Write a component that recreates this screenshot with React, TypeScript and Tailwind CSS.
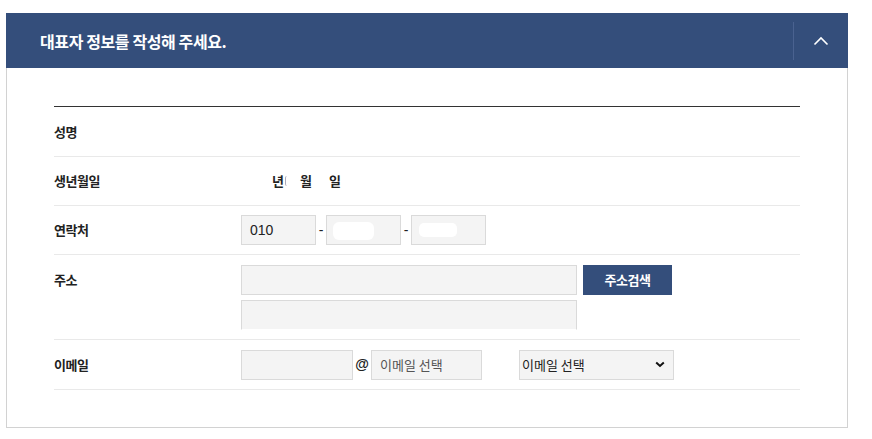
import React from "react";

const KR = { fontFamily: '"Noto Sans CJK KR", "Noto Sans", sans-serif' } as React.CSSProperties;

function Row({ label, children, className = "", labelClass = "" }: { label: string; children?: React.ReactNode; className?: string; labelClass?: string }) {
  return (
    <div className={`flex border-b border-[#e9e9e9] ${className}`}>
      <div className={`w-[187px] shrink-0 text-[13px] font-bold text-[#222] tracking-[-0.5px] ${labelClass}`}>{label}</div>
      <div className="flex-1 flex items-center">{children}</div>
    </div>
  );
}

export default function App() {
  return (
    <div className="w-[872px] h-[439px] bg-white pt-[13px] pl-[6px] pr-[24px]" style={KR}>
      <div className="h-[55px] bg-[#344e7b] flex items-center justify-between">
        <div className="pl-[34px] text-white text-[16px] font-bold tracking-[-0.4px]">대표자 정보를 작성해 주세요.</div>
        <div className="h-[38px] w-[55px] border-l border-[#4a6290] flex items-center justify-center">
          <svg width="16" height="10" viewBox="0 0 16 10" fill="none">
            <path d="M1.5 8.5 L8 2 L14.5 8.5" stroke="white" strokeWidth="1.6" />
          </svg>
        </div>
      </div>
      <div className="border border-t-0 border-[#d2d2d2] pt-[38px] pb-[37px] pl-[47px] pr-[47px]">
        <div className="border-t border-[#333]">
          <Row label="성명" className="h-[50px] items-center" />
          <Row label="생년월일" className="h-[49px] items-center">
            <div className="flex items-center text-[13px] font-bold text-[#222] h-[30px]">
              <span className="ml-[31px]">년</span>
              <span className="ml-[1px] w-[2px] h-[10px] border-l border-[#aab] rounded-l-full"></span>
              <span className="ml-[13px]">월</span>
              <span className="ml-[17px]">일</span>
            </div>
          </Row>
          <Row label="연락처" className="h-[49px] items-center">
            <div className="flex items-center text-[14px] text-[#222]" style={{ fontFamily: '"Liberation Sans", Arial, sans-serif' }}>
              <div className="w-[75px] h-[30px] bg-[#f4f4f4] border border-[#dadada] flex items-center pl-[8px]">010</div>
              <span className="w-[10px] text-center">-</span>
              <div className="relative w-[75px] h-[30px] bg-[#f4f4f4] border border-[#dadada]">
                <div className="absolute left-[6px] top-[6px] w-[41px] h-[18px] bg-white rounded-[6px]"></div>
              </div>
              <span className="w-[10px] text-center">-</span>
              <div className="relative w-[75px] h-[30px] bg-[#f4f4f4] border border-[#dadada]">
                <div className="absolute left-[7px] top-[7px] w-[38px] h-[14px] bg-white rounded-[5px]"></div>
              </div>
            </div>
          </Row>
          <Row label="주소" className="h-[85px] items-start pt-[10px]" labelClass="leading-[30px]">
            <div className="flex flex-col gap-[5px]">
              <div className="flex items-center gap-[6px]">
                <div className="w-[336px] h-[30px] bg-[#f4f4f4] border border-[#dadada]"></div>
                <button className="w-[89px] h-[30px] bg-[#344e7b] text-white text-[13px] font-bold tracking-[-0.5px]">주소검색</button>
              </div>
              <div className="w-[336px] h-[30px] bg-[#f4f4f4] border border-[#dadada] border-b-white"></div>
            </div>
          </Row>
          <Row label="이메일" className="h-[50px] items-center">
            <div className="flex items-center text-[13px] text-[#333]">
              <div className="w-[112px] h-[30px] bg-[#f4f4f4] border border-[#dadada]"></div>
              <span className="w-[18px] text-center text-[14px] font-bold text-[#222]" style={{ fontFamily: '"Liberation Sans", Arial, sans-serif' }}>@</span>
              <div className="w-[111px] h-[30px] bg-[#f4f4f4] border border-[#dadada] flex items-center pl-[8px] text-[#555]">이메일 선택</div>
              <div className="ml-[37px] w-[155px] h-[30px] bg-[#f4f4f4] border border-[#dadada] flex items-center justify-between pl-[2px] pr-[8px] text-[#222]">
                <span>이메일 선택</span>
                <svg width="10" height="7" viewBox="0 0 10 7" fill="none">
                  <path d="M1.2 1.5 L5 5 L8.8 1.5" stroke="#111" strokeWidth="2" />
                </svg>
              </div>
            </div>
          </Row>
        </div>
      </div>
    </div>
  );
}
